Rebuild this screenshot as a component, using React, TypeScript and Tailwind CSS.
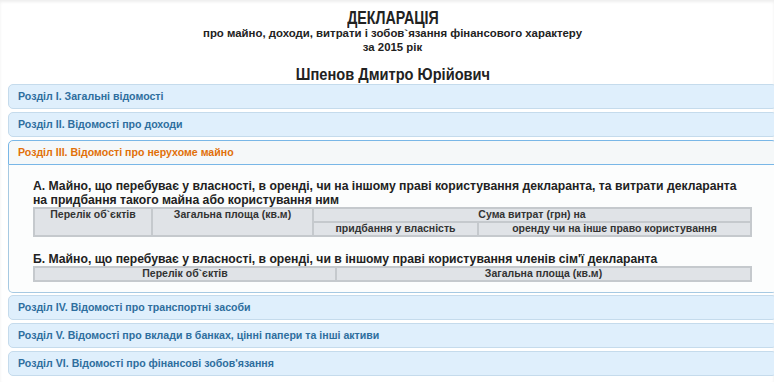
import React from 'react';

const Header: React.FC<{ title: string; active?: boolean; gap?: string }> = ({ title, active, gap = 'mt-[3px]' }) => (
  <div
    className={
      gap +
      ' ' +
      (active
        ? 'rounded-t-[5px] border border-[#79b7e7] bg-[#f5f8f9] text-[#e17009]'
        : 'rounded-[5px] border border-[#c5dbec] bg-[#dfeffc] text-[#2e6e9e]') +
      ' flex h-[25px] items-center pl-[9px] text-[10.6px] font-bold'
    }
  >
    {title}
  </div>
);

const th = 'border-2 border-[#c5c9cd] bg-[#e0e3e7] px-1 text-[10.5px] font-bold leading-[11px] text-[#333] align-top';

export default function App() {
  return (
    <div className="h-[382px] w-[774px] overflow-hidden bg-white font-['Liberation_Sans',Arial,sans-serif] text-[#222] shadow-[inset_0_2px_3px_rgba(0,0,0,0.07)]">
      <div className="w-[777px] pl-2 pt-[11px]">
        <div className="text-center font-bold">
          <div className="text-[18px] leading-[15px]">
            <span className="inline-block scale-x-[0.79]">ДЕКЛАРАЦІЯ</span>
          </div>
          <div className="text-[11.4px] leading-[14px]">про майно, доходи, витрати і зобов`язання фінансового характеру</div>
          <div className="text-[11.4px] leading-[14px]">за 2015 рік</div>
          <div className="mt-[12px] text-[17px] leading-[18px]">
            <span className="inline-block scale-x-[0.86]">Шпенов Дмитро Юрійович</span>
          </div>
        </div>

        <div>
          <Header gap="" title="Розділ І. Загальні відомості" />
          <Header title="Розділ ІІ. Відомості про доходи" />
          <Header active title="Розділ ІІІ. Відомості про нерухоме майно" />
          <div className="h-[128px] rounded-b-[5px] border border-t-0 border-[#a6c9e2] bg-[#fcfdfd] px-6 pt-[14px]">
            <div className="text-[12.2px] font-bold leading-[14px]">
              А. Майно, що перебуває у власності, в оренді, чи на іншому праві користування декларанта, та витрати декларанта на придбання такого майна або користування ним
            </div>
            <table className="w-full border-collapse">
              <tbody>
                <tr className="h-[14px]">
                  <th rowSpan={2} className={th + ' w-[118px]'}>Перелік об`єктів</th>
                  <th rowSpan={2} className={th + ' w-[161px]'}>Загальна площа (кв.м)</th>
                  <th colSpan={2} className={th}>Сума витрат (грн) на</th>
                </tr>
                <tr className="h-[14px]">
                  <th className={th + ' w-[165px]'}>придбання у власність</th>
                  <th className={th}>оренду чи на інше право користування</th>
                </tr>
              </tbody>
            </table>
            <div className="mt-[15px] text-[12.2px] font-bold leading-[14px]">
              Б. Майно, що перебуває у власності, в оренді, чи в іншому праві користування членів сім'ї декларанта
            </div>
            <table className="w-full border-collapse">
              <tbody>
                <tr className="h-[14px]">
                  <th className={th + ' w-[302px]'}>Перелік об`єктів</th>
                  <th className={th}>Загальна площа (кв.м)</th>
                </tr>
              </tbody>
            </table>
          </div>
          <Header gap="mt-[2px]" title="Розділ IV. Відомості про транспортні засоби" />
          <Header title="Розділ V. Відомості про вклади в банках, цінні папери та інші активи" />
          <Header title="Розділ VI. Відомості про фінансові зобов'язання" />
        </div>
      </div>
    </div>
  );
}
